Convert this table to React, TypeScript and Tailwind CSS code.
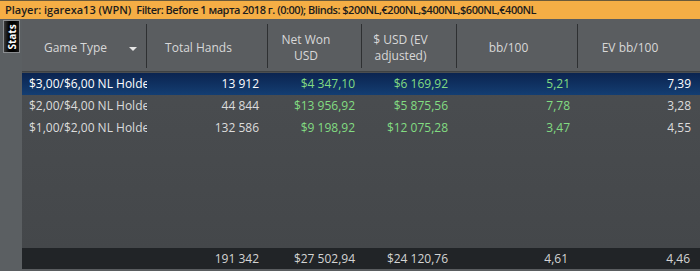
type Row = {
  game: string;
  hands: string;
  net: string;
  usd: string;
  bb: string;
  ev: string;
};

const rows: Row[] = [
  { game: "$3,00/$6,00 NL Holdem", hands: "13 912", net: "$4 347,10", usd: "$6 169,92", bb: "5,21", ev: "7,39" },
  { game: "$2,00/$4,00 NL Holdem", hands: "44 844", net: "$13 956,92", usd: "$5 875,56", bb: "7,78", ev: "3,28" },
  { game: "$1,00/$2,00 NL Holdem", hands: "132 586", net: "$9 198,92", usd: "$12 075,28", bb: "3,47", ev: "4,55" },
];

const gridCols = "grid grid-cols-[125px_121px_94px_95px_121px_122px]";

const HeaderCell = ({ children, last, arrow }: { children: React.ReactNode; last?: boolean; arrow?: boolean }) => (
  <div className="relative flex items-center justify-center h-full pr-[18px] pt-[6px]">
    <div className="text-center leading-[16px]">{children}</div>
    {arrow && (
      <div className="absolute right-[10px] top-[28px] w-0 h-0 border-l-[4px] border-r-[4px] border-t-[4px] border-l-transparent border-r-transparent border-t-[#e6e6e6]" />
    )}
    {!last && <div className="absolute right-0 top-[5px] bottom-[3px] w-px bg-[#2e3032]" />}
  </div>
);

const App = () => {
  return (
    <div
      className="w-[700px] h-[271px] bg-[#5a5d60] flex flex-col overflow-hidden"
      style={{ fontFamily: '"Open Sans", "Noto Sans", sans-serif' }}
    >
      <div className="h-[19px] shrink-0 bg-[#f5ae45] border-t border-[#6b5a3a] pl-[5px] flex items-center text-[11px] font-semibold text-[#1c1c1c] whitespace-nowrap">
        <span>Player: igarexa13 (WPN)</span>
        <span className="ml-[5px] tracking-[-0.5px]">
          Filter: Before 1 марта 2018 г. (0:00); Blinds: $200NL,€200NL,$400NL,$600NL,€400NL
        </span>
      </div>
      <div className="flex flex-1 min-h-0">
        <div className="w-[22px] shrink-0 bg-[#5b5f62] pt-[1px] pl-[3px]">
          <div className="w-[17px] h-[33px] border border-[#8a8d90] bg-gradient-to-r from-[#3a3a3a] via-[#000] to-[#1a1a1a] flex items-center justify-center">
            <span className="-rotate-90 text-[10px] font-bold text-white leading-none">Stats</span>
          </div>
        </div>
        <div className="flex-1 flex flex-col min-w-0">
          <div className={`${gridCols} h-[53px] shrink-0 bg-[#5a5d60] text-[12px] text-[#d8d8d8] border-b border-[#3e4143]`}>
            <HeaderCell arrow>Game Type</HeaderCell>
            <HeaderCell>Total Hands</HeaderCell>
            <HeaderCell>
              Net Won
              <br />
              USD
            </HeaderCell>
            <HeaderCell>
              $ USD (EV
              <br />
              adjusted)
            </HeaderCell>
            <HeaderCell>bb/100</HeaderCell>
            <HeaderCell last>EV bb/100</HeaderCell>
          </div>
          <div className="flex-1 bg-gradient-to-b from-[#4a4d50] to-[#44474a] pt-px">
            {rows.map((r, i) => (
              <div
                key={i}
                className={`${gridCols} h-[22px] items-center text-[12px] ${
                  i === 0 ? "bg-gradient-to-b from-[#0b2450] to-[#143e72]" : ""
                }`}
              >
                <div className={`pl-[7px] pr-[2px] overflow-hidden whitespace-nowrap ${i === 0 ? "text-white" : "text-[#dcdcdc]"}`}>
                  {r.game}
                </div>
                <div className={`text-right pr-[9px] ${i === 0 ? "text-white" : "text-[#dcdcdc]"}`}>{r.hands}</div>
                <div className="text-right pr-[7px] text-[#82dc82]">{r.net}</div>
                <div className="text-right pr-[9px] text-[#82dc82]">{r.usd}</div>
                <div className="text-right pr-[8px] text-[#82dc82]">{r.bb}</div>
                <div className={`text-right pr-[9px] ${i === 0 ? "text-white" : "text-[#dcdcdc]"}`}>{r.ev}</div>
              </div>
            ))}
          </div>
          <div className={`${gridCols} h-[21px] shrink-0 items-center bg-[#212427] text-[12px] text-[#d4d4d4]`}>
            <div />
            <div className="text-right pr-[9px]">191 342</div>
            <div className="text-right pr-[7px]">$27 502,94</div>
            <div className="text-right pr-[9px]">$24 120,76</div>
            <div className="text-right pr-[10px]">4,61</div>
            <div className="text-right pr-[10px]">4,46</div>
          </div>
          <div className="h-[2px] shrink-0 bg-[#5a5d60]" />
        </div>
      </div>
    </div>
  );
};

export default App;
